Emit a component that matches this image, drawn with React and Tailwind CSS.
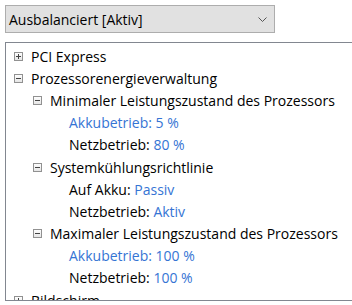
import React from "react";

const rows = [
  { level: 0, box: "plus", label: "PCI Express" },
  { level: 0, box: "minus", label: "Prozessorenergieverwaltung" },
  { level: 1, box: "minus", label: "Minimaler Leistungszustand des Prozessors" },
  { level: 2, label: "Akkubetrieb:", value: "5 %", allBlue: true },
  { level: 2, label: "Netzbetrieb:", value: "80 %" },
  { level: 1, box: "minus", label: "Systemkühlungsrichtlinie" },
  { level: 2, label: "Auf Akku:", value: "Passiv" },
  { level: 2, label: "Netzbetrieb:", value: "Aktiv" },
  { level: 1, box: "minus", label: "Maximaler Leistungszustand des Prozessors" },
  { level: 2, label: "Akkubetrieb:", value: "100 %", allBlue: true },
  { level: 2, label: "Netzbetrieb:", value: "100 %" },
  { level: 0, box: "plus", label: "Bildschirm" },
];

const indent = ["pl-[8px]", "pl-[27px]", "pl-[46px]"];

function Expander({ type }) {
  if (!type) return <span className="w-[9px] h-[9px] shrink-0" />;
  return (
    <svg width="9" height="9" viewBox="0 0 9 9" className="shrink-0">
      <defs>
        <linearGradient id="bx" x1="0" y1="0" x2="0" y2="1">
          <stop offset="0" stopColor="#ffffff" />
          <stop offset="1" stopColor="#e4e4e4" />
        </linearGradient>
      </defs>
      <rect x="0.5" y="0.5" width="8" height="8" fill="url(#bx)" stroke="#919191" />
      <rect x="2" y="4" width="5" height="1" fill="#444" />
      {type === "plus" && <rect x="4" y="2" width="1" height="5" fill="#444" />}
    </svg>
  );
}

export default function App() {
  return (
    <div className="w-[352px] h-[305px] bg-white overflow-hidden font-['Open_Sans',sans-serif] text-[14px] text-black">
      {/* Energieplan Auswahl */}
      <div className="ml-[5px] mt-[5px] w-[270px] h-[28px] border border-[#adadad] bg-[#e1e1e1] flex items-center justify-between pl-[3px] pr-[7px]">
        <span>Ausbalanciert [Aktiv]</span>
        <svg width="9" height="5" viewBox="0 0 9 5">
          <path d="M0.5 0.5 L4.5 4.5 L8.5 0.5" fill="none" stroke="#555" strokeWidth="1" />
        </svg>
      </div>

      {/* Baum */}
      <div className="ml-[5px] mt-[9px] w-[360px] h-[259px] border border-[#828790] overflow-hidden pt-[2px]">
        {rows.map((r, i) => (
          <div key={i} className={`h-[22.2px] flex items-center gap-[8px] whitespace-nowrap ${indent[r.level]}`}>
            <Expander type={r.box} />
            {r.value ? (
              <span className={r.allBlue ? "text-[#3574d4]" : ""}>
                {r.label} <span className="text-[#3574d4]">{r.value}</span>
              </span>
            ) : (
              <span>{r.label}</span>
            )}
          </div>
        ))}
      </div>
    </div>
  );
}
